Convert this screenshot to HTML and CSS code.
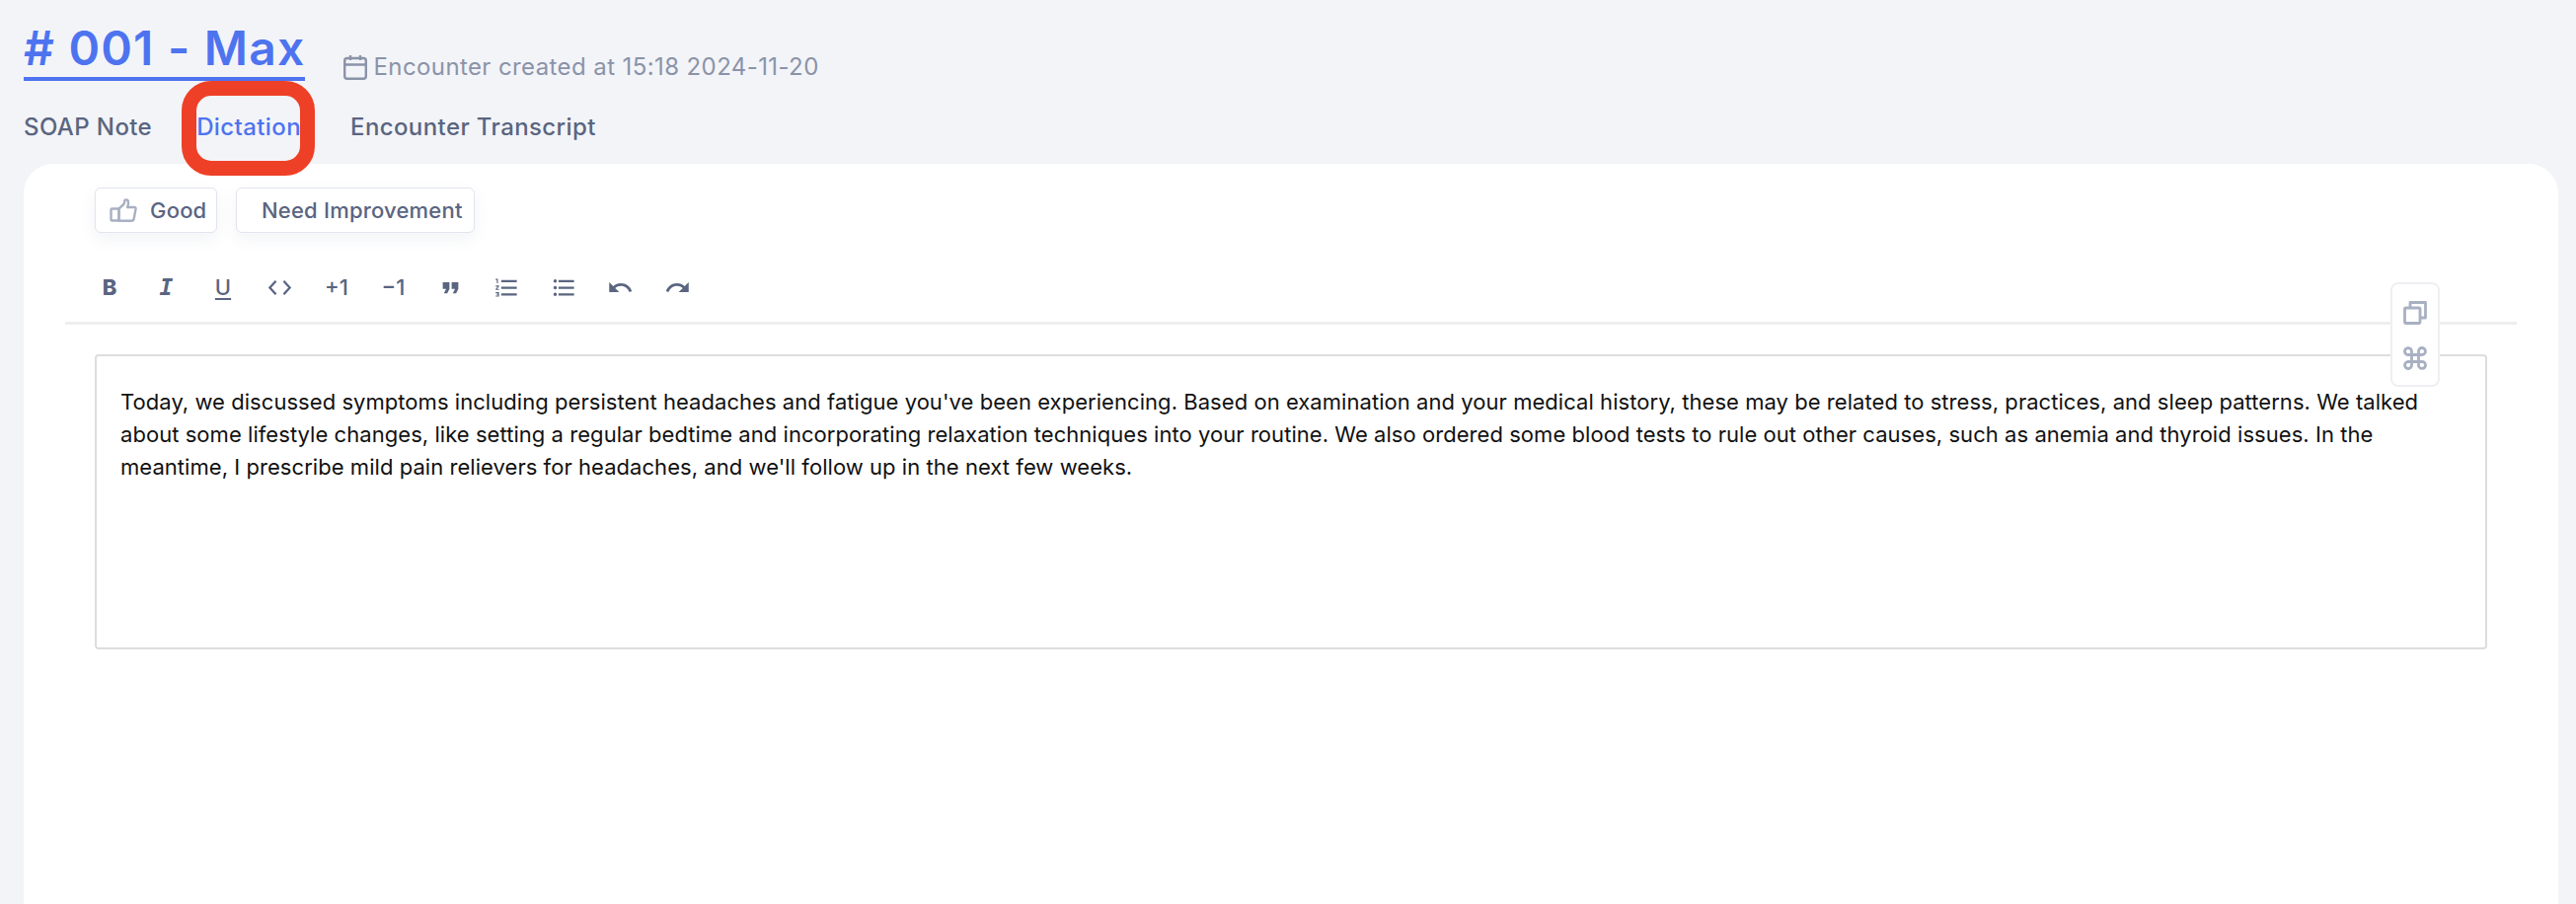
FILE: index.html
```html
<!DOCTYPE html>
<html lang="en">
<head>
    <meta charset="UTF-8">
    <title>Encounter 001 - Dictation</title>
    <link rel="stylesheet" href="styles.css">
</head>
<body>
    <div class="page">
        <div class="encounter-header">
            <h1 class="encounter-title">#&nbsp;001 - Max</h1>
            <div class="encounter-meta">
                <svg class="calendar-icon" viewBox="0 0 24 26" fill="none" stroke="currentColor" stroke-width="2.4">
                    <rect x="1.2" y="4" width="21.6" height="20.8" rx="2.5"/>
                    <path d="M1.500 10.500h21M7 1v5M17 1v5"/>
                </svg>
                <span>Encounter created at 15:18 2024-11-20</span>
            </div>
        </div>

        <div class="tabs">
            <div class="tab">SOAP Note</div>
            <div class="tab tab-active">
                Dictation
                <div class="highlight-box"></div>
            </div>
            <div class="tab">Encounter Transcript</div>
        </div>

        <div class="card">
            <div class="feedback">
                <button class="feedback-btn">
                    <svg class="thumb-icon" viewBox="0 0 28 24" fill="none" stroke="currentColor" stroke-width="2.4" stroke-linejoin="round">
                        <path d="M9.500 10.500l4.800-4.500c.8-1 1-2.500 1-4 0-.8 3-1 3.500.6.500 1.700 0 4.500-.8 6.400h7c1.200 0 1.700.8 1.500 2l-1.800 9.500c-.3 1.400-1 2.300-2.500 2.300H9.500z"/>
                        <rect x="1.500" y="10.500" width="8" height="12" rx="1"/>
                    </svg>
                    Good
                </button>
                <button class="feedback-btn feedback-btn-wide">Need Improvement</button>
            </div>

            <div class="toolbar">
                <span class="tool tool-bold">B</span>
                <span class="tool tool-italic">I</span>
                <span class="tool tool-underline">U</span>
                <span class="tool">
                    <svg class="tool-icon" viewBox="0 0 24 24" fill="none" stroke="currentColor" stroke-width="2"><path d="M8.500 6l-5.500 6 5.500 6M15.500 6l5.500 6-5.500 6"/></svg>
                </span>
                <span class="tool tool-text">+1</span>
                <span class="tool tool-text">−1</span>
                <span class="tool">
                    <svg class="tool-icon" viewBox="0 0 24 24" fill="currentColor"><path d="M6 17h3l2-4V7H5v6h3zm8 0h3l2-4V7h-6v6h3z"/></svg>
                </span>
                <span class="tool">
                    <svg class="tool-icon" viewBox="0 0 24 24" fill="currentColor"><path d="M2 17h2v.5H3v1h1v.5H2v1h3v-4H2v1zm1-9h1V4H2v1h1v3zm-1 3h1.800L2 13.100V14h3v-1H3.200L5 10.900V10H2v1zm5-6v2h14V5H7zm0 14h14v-2H7v2zm0-6h14v-2H7v2z"/></svg>
                </span>
                <span class="tool">
                    <svg class="tool-icon" viewBox="0 0 24 24" fill="currentColor"><path d="M4 10.500c-.83 0-1.500.67-1.500 1.500s.67 1.500 1.500 1.500 1.500-.67 1.500-1.500-.67-1.500-1.500-1.500zm0-6c-.83 0-1.500.67-1.500 1.500S3.170 7.500 4 7.500 5.500 6.830 5.500 6 4.830 4.500 4 4.500zm0 12c-.83 0-1.500.68-1.500 1.500s.68 1.500 1.500 1.500 1.500-.68 1.500-1.500-.67-1.500-1.500-1.500zM7 19h14v-2H7v2zm0-6h14v-2H7v2zm0-8v2h14V5H7z"/></svg>
                </span>
                <span class="tool">
                    <svg class="tool-icon" viewBox="0 0 24 24" fill="currentColor"><path d="M12.500 8c-2.650 0-5.050.99-6.900 2.600L2 7v9h9l-3.620-3.620c1.390-1.160 3.160-1.880 5.120-1.880 3.540 0 6.550 2.310 7.600 5.500l2.370-.78C21.080 11.030 17.150 8 12.500 8z"/></svg>
                </span>
                <span class="tool">
                    <svg class="tool-icon" viewBox="0 0 24 24" fill="currentColor"><path d="M18.400 10.600C16.550 8.990 14.150 8 11.500 8c-4.650 0-8.580 3.030-9.960 7.220L3.900 16c1.050-3.190 4.050-5.500 7.600-5.500 1.950 0 3.730.72 5.120 1.880L13 16h9V7l-3.600 3.600z"/></svg>
                </span>
            </div>

            <div class="editor-wrap">
                <div class="editor">Today, we discussed symptoms including persistent headaches and fatigue you've been experiencing. Based on examination and your medical history, these may be related to stress, practices, and sleep patterns. We talked about some lifestyle changes, like setting a regular bedtime and incorporating relaxation techniques into your routine. We also ordered some blood tests to rule out other causes, such as anemia and thyroid issues. In the meantime, I prescribe mild pain relievers for headaches, and we'll follow up in the next few weeks.</div>
            </div>

            <div class="side-tools">
                <svg class="side-icon" viewBox="0 0 24 24" fill="none" stroke="currentColor" stroke-width="2.800" stroke-linejoin="round">
                    <rect x="1.500" y="7" width="15.500" height="15.500" rx="1"/>
                    <path d="M7 7V1.500h15.500V17H17"/>
                </svg>
                <svg class="side-icon" viewBox="0 0 24 24" fill="none" stroke="currentColor" stroke-width="2.800">
                    <path d="M8.500 8.500h7v7h-7zM8.500 8.500H5.500a3.500 3.500 0 1 1 3-3.500zM15.500 8.500V5.500a3.500 3.500 0 1 1 3.500 3zM15.500 15.500h3a3.500 3.500 0 1 1-3 3.500zM8.500 15.500v3a3.500 3.500 0 1 1-3.500-3z"/>
                </svg>
            </div>
        </div>
    </div>
</body>
</html>
```

FILE: styles.css
```css
* {
    margin: 0;
    padding: 0;
    box-sizing: border-box;
}

html, body {
    height: 100%;
    overflow: hidden;
}

body {
    background: #f3f4f8;
    font-family: "Inter", "Open Sans", sans-serif;
}

.page {
    display: flex;
    flex-direction: column;
    height: 916px;
    padding: 0 18px 0 24px;
}

.encounter-header {
    display: flex;
    align-items: flex-end;
    height: 82px;
}

.encounter-title {
    height: 82px;
    padding-top: 20px;
    border-bottom: 4px solid #4e73ef;
    color: #4e73ef;
    font-size: 48px;
    line-height: 58px;
    font-weight: 600;
    letter-spacing: 1.200px;
    white-space: nowrap;
}

.encounter-meta {
    display: flex;
    align-items: flex-end;
    gap: 6px;
    margin-left: 39px;
    margin-bottom: -1px;
    color: #8a93a8;
    font-size: 24px;
    line-height: 30px;
    letter-spacing: 0.400px;
}

.calendar-icon {
    width: 24px;
    height: 26px;
    margin-bottom: 2px;
}

.tabs {
    display: flex;
    height: 84px;
    color: #5a6580;
    font-size: 24px;
    font-weight: 500;
    letter-spacing: 0.400px;
}

.tab {
    position: relative;
    margin-right: 45px;
    padding-top: 31px;
    line-height: 32px;
}

.tab-active {
    margin-right: 50px;
    color: #4e73ef;
}

/* red annotation drawn over the screenshot */
.highlight-box {
    position: absolute;
    z-index: 2;
    top: 0;
    left: -15px;
    right: -14px;
    height: 96px;
    border: 15px solid #ee4027;
    border-radius: 30px;
}

.card {
    position: relative;
    flex: 1;
    padding: 24px 42px 0;
    background: white;
    border-radius: 30px 30px 0 0;
}

.feedback {
    display: flex;
    gap: 19px;
    padding-left: 30px;
}

.feedback-btn {
    display: flex;
    align-items: center;
    gap: 13px;
    width: 124px;
    height: 46px;
    padding-left: 14px;
    border: 1px solid #e2e4ee;
    border-radius: 6px;
    background: white;
    box-shadow: 0 6px 16px rgba(90, 100, 140, 0.08);
    color: #5a6580;
    font-family: inherit;
    font-size: 22px;
    font-weight: 500;
    letter-spacing: 0.200px;
}

.feedback-btn-wide {
    width: 242px;
    padding-left: 25px;
}

.thumb-icon {
    width: 28px;
    height: 24px;
    color: #a8b0c2;
}

.toolbar {
    display: flex;
    align-items: center;
    height: 93px;
    padding-top: 20px;
    padding-left: 33px;
    border-bottom: 3px solid #eeeeee;
    color: #5a6580;
}

.tool {
    display: flex;
    flex-shrink: 0;
    align-items: center;
    justify-content: center;
    width: 24px;
    height: 24px;
    margin-right: 33.500px;
    font-size: 22px;
    font-weight: 500;
}

.tool-bold {
    font-weight: 800;
}

.tool-italic {
    font-family: "DejaVu Sans Mono", monospace;
    font-size: 23px;
    font-style: italic;
    font-weight: 700;
}

.tool-underline {
    text-decoration: underline;
    text-decoration-thickness: 2px;
    text-underline-offset: 3px;
}

.tool-icon {
    flex-shrink: 0;
    width: 27px;
    height: 27px;
}

.editor-wrap {
    padding: 30px 30px 0 30px;
}

.editor {
    height: 299px;
    padding: 30px 24px 0;
    border: 2px solid #dddddd;
    border-radius: 4px;
    color: #111111;
    font-size: 22px;
    line-height: 33px;
    letter-spacing: 0.050px;
}

.side-tools {
    position: absolute;
    top: 120px;
    right: 120px;
    display: flex;
    flex-direction: column;
    align-items: center;
    gap: 22px;
    width: 50px;
    height: 106px;
    padding-top: 17px;
    border: 2px solid #eeeff3;
    border-radius: 8px;
    background: white;
}

.side-icon {
    width: 24px;
    height: 24px;
    color: #a8b0c2;
}
```
